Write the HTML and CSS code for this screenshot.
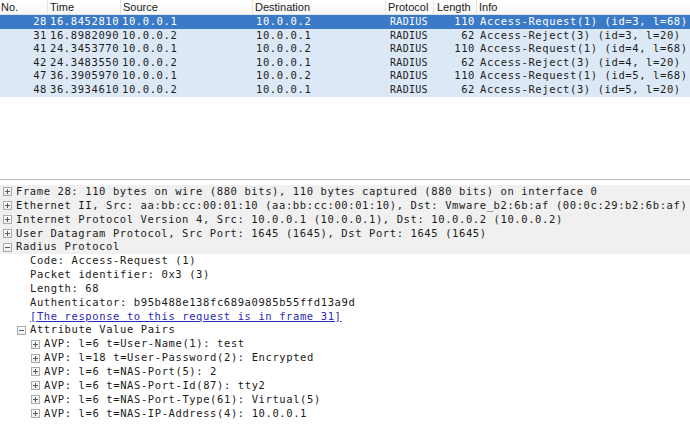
FILE: index.html
```html
<!DOCTYPE html>
<html>
<head>
<meta charset="utf-8">
<link rel="stylesheet" href="styles.css">
</head>
<body>
<div class="app">
  <div class="packet-list">
    <div class="plist-header">
      <div class="hcell c-no">No.</div>
      <div class="hcell c-time">Time</div>
      <div class="hcell c-src">Source</div>
      <div class="hcell c-dst">Destination</div>
      <div class="hcell c-proto">Protocol</div>
      <div class="hcell c-len">Length</div>
      <div class="hcell c-info">Info</div>
    </div>
    <div class="prow selected">
      <div class="cell c-no num">28</div><div class="cell c-time">16.8452810</div><div class="cell c-src">10.0.0.1</div><div class="cell c-dst">10.0.0.2</div><div class="cell c-proto">RADIUS</div><div class="cell c-len num">110</div><div class="cell c-info">Access-Request(1) (id=3, l=68)</div>
    </div>
    <div class="prow">
      <div class="cell c-no num">31</div><div class="cell c-time">16.8982090</div><div class="cell c-src">10.0.0.2</div><div class="cell c-dst">10.0.0.1</div><div class="cell c-proto">RADIUS</div><div class="cell c-len num">62</div><div class="cell c-info">Access-Reject(3) (id=3, l=20)</div>
    </div>
    <div class="prow">
      <div class="cell c-no num">41</div><div class="cell c-time">24.3453770</div><div class="cell c-src">10.0.0.1</div><div class="cell c-dst">10.0.0.2</div><div class="cell c-proto">RADIUS</div><div class="cell c-len num">110</div><div class="cell c-info">Access-Request(1) (id=4, l=68)</div>
    </div>
    <div class="prow">
      <div class="cell c-no num">42</div><div class="cell c-time">24.3483550</div><div class="cell c-src">10.0.0.2</div><div class="cell c-dst">10.0.0.1</div><div class="cell c-proto">RADIUS</div><div class="cell c-len num">62</div><div class="cell c-info">Access-Reject(3) (id=4, l=20)</div>
    </div>
    <div class="prow">
      <div class="cell c-no num">47</div><div class="cell c-time">36.3905970</div><div class="cell c-src">10.0.0.1</div><div class="cell c-dst">10.0.0.2</div><div class="cell c-proto">RADIUS</div><div class="cell c-len num">110</div><div class="cell c-info">Access-Request(1) (id=5, l=68)</div>
    </div>
    <div class="prow">
      <div class="cell c-no num">48</div><div class="cell c-time">36.3934610</div><div class="cell c-src">10.0.0.2</div><div class="cell c-dst">10.0.0.1</div><div class="cell c-proto">RADIUS</div><div class="cell c-len num">62</div><div class="cell c-info">Access-Reject(3) (id=5, l=20)</div>
    </div>
  </div>

  <div class="details">
    <div class="drow l0 top"><span class="tog plus"></span><span class="txt">Frame 28: 110 bytes on wire (880 bits), 110 bytes captured (880 bits) on interface 0</span></div>
    <div class="drow l0 top"><span class="tog plus"></span><span class="txt">Ethernet II, Src: aa:bb:cc:00:01:10 (aa:bb:cc:00:01:10), Dst: Vmware_b2:6b:af (00:0c:29:b2:6b:af)</span></div>
    <div class="drow l0 top"><span class="tog plus"></span><span class="txt">Internet Protocol Version 4, Src: 10.0.0.1 (10.0.0.1), Dst: 10.0.0.2 (10.0.0.2)</span></div>
    <div class="drow l0 top"><span class="tog plus"></span><span class="txt">User Datagram Protocol, Src Port: 1645 (1645), Dst Port: 1645 (1645)</span></div>
    <div class="drow l0 top"><span class="tog minus"></span><span class="txt">Radius Protocol</span></div>
    <div class="drow l1"><span class="tog none"></span><span class="txt">Code: Access-Request (1)</span></div>
    <div class="drow l1"><span class="tog none"></span><span class="txt">Packet identifier: 0x3 (3)</span></div>
    <div class="drow l1"><span class="tog none"></span><span class="txt">Length: 68</span></div>
    <div class="drow l1"><span class="tog none"></span><span class="txt">Authenticator: b95b488e138fc689a0985b55ffd13a9d</span></div>
    <div class="drow l1"><span class="tog none"></span><span class="txt link">[The response to this request is in frame 31]</span></div>
    <div class="drow l1"><span class="tog minus"></span><span class="txt">Attribute Value Pairs</span></div>
    <div class="drow l2"><span class="tog plus"></span><span class="txt">AVP: l=6 t=User-Name(1): test</span></div>
    <div class="drow l2"><span class="tog plus"></span><span class="txt">AVP: l=18 t=User-Password(2): Encrypted</span></div>
    <div class="drow l2"><span class="tog plus"></span><span class="txt">AVP: l=6 t=NAS-Port(5): 2</span></div>
    <div class="drow l2"><span class="tog plus"></span><span class="txt">AVP: l=6 t=NAS-Port-Id(87): tty2</span></div>
    <div class="drow l2"><span class="tog plus"></span><span class="txt">AVP: l=6 t=NAS-Port-Type(61): Virtual(5)</span></div>
    <div class="drow l2"><span class="tog plus"></span><span class="txt">AVP: l=6 t=NAS-IP-Address(4): 10.0.0.1</span></div>
  </div>
</div>
</body>
</html>
```

FILE: styles.css
```css
html, body {
  margin: 0;
  padding: 0;
  background: #ffffff;
}

.app {
  width: 690px;
  height: 437px;
  overflow: hidden;
  display: flex;
  flex-direction: column;
}

.packet-list {
  height: 179px;
  flex: none;
  border-bottom: 1px solid #b9b9b9;
  background: #ffffff;
}

.plist-header {
  display: flex;
  height: 15px;
  background: linear-gradient(#ffffff, #f7f7f7);
  border-bottom: 1px solid #e2e2e2;
  box-sizing: border-box;
  font-family: "Liberation Sans", Arial, sans-serif;
  font-size: 11px;
  color: #1b1b1b;
}

.hcell {
  box-sizing: border-box;
  padding-left: 2px;
  line-height: 14px;
  border-right: 1px solid #e4e4e4;
  white-space: nowrap;
  overflow: hidden;
}

.hcell.c-no { padding-left: 1px; }
.hcell.c-len { padding-left: 3px; }
.hcell.c-info { border-right: none; }

.c-no { width: 48px; flex: none; }
.c-time { width: 73px; flex: none; }
.c-src { width: 132px; flex: none; }
.c-dst { width: 133px; flex: none; }
.c-proto { width: 48px; flex: none; }
.c-len { width: 43px; flex: none; }
.c-info { flex: 1; }

.prow {
  display: flex;
  height: 13.6px;
  background: #dce8f6;
  color: #1c1c1c;
  font-family: "DejaVu Sans Mono", monospace;
  font-size: 10.5px;
  letter-spacing: 0.6px;
  line-height: 13.6px;
}

.prow.selected {
  background: #3b7ac6;
  color: #ffffff;
}

.cell {
  box-sizing: border-box;
  white-space: nowrap;
  overflow: hidden;
  padding-left: 2px;
}

.cell.num {
  text-align: right;
  padding-left: 0;
  padding-right: 1px;
}

.cell.c-src { padding-left: 1px; }
.cell.c-dst { padding-left: 3px; }
.cell.c-proto { padding-left: 4px; font-size: 10px; letter-spacing: 0.3px; }
.cell.c-len { padding-right: 2px; }
.cell.c-info { padding-left: 3px; }

.details {
  padding-top: 5px;
  font-family: "DejaVu Sans Mono", monospace;
  font-size: 10.5px;
  letter-spacing: 0.6px;
  color: #1a1a1a;
}

.drow {
  display: flex;
  align-items: center;
  height: 13.85px;
  line-height: 13.85px;
  white-space: nowrap;
}

.drow.top { background: #f0f0f0; }

.drow.l0 { padding-left: 3px; }
.drow.l1 { padding-left: 17px; }
.drow.l2 { padding-left: 31px; }

.tog {
  position: relative;
  flex: none;
  width: 9px;
  height: 9px;
  box-sizing: border-box;
  margin-right: 4px;
  border: 1px solid #ababab;
  background: linear-gradient(#ffffff, #ececec);
}

.tog.none {
  border: none;
  background: none;
}

.tog.plus::before,
.tog.minus::before {
  content: "";
  position: absolute;
  left: 1px;
  top: 3px;
  width: 5px;
  height: 1px;
  background: #5a5a5a;
}

.tog.plus::after {
  content: "";
  position: absolute;
  left: 3px;
  top: 1px;
  width: 1px;
  height: 5px;
  background: #5a5a5a;
}

.txt.link {
  color: #2b2bb5;
  text-decoration: underline;
}
```
